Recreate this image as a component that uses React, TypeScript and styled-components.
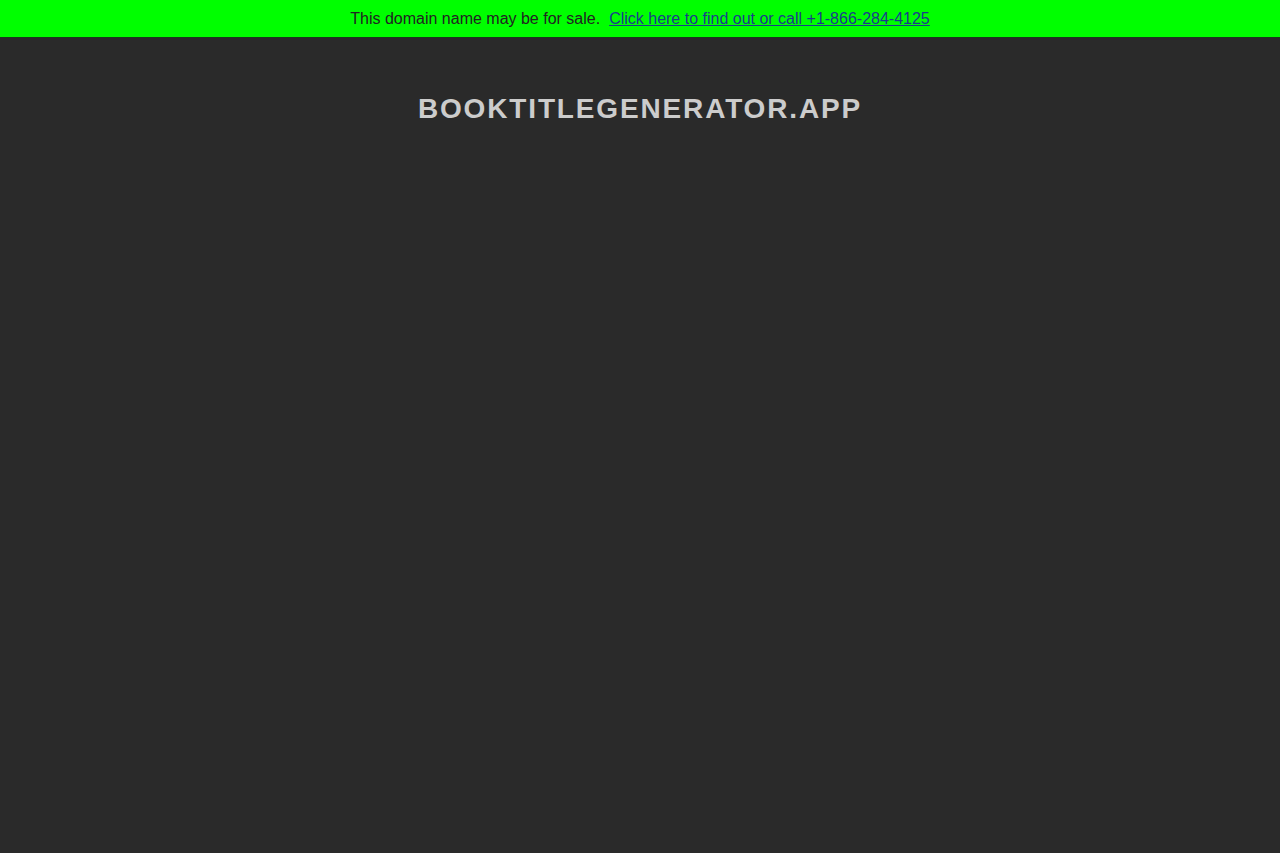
import React from "react";
import styled, { createGlobalStyle } from "styled-components";

const GlobalStyle = createGlobalStyle`
  html, body {
    margin: 0;
    padding: 0;
    height: 100%;
    background: #2a2a2a;
    font-family: "Liberation Sans", Arial, sans-serif;
  }
  #root {
    min-height: 100%;
  }
`;

const SaleBar = styled.div`
  height: 37px;
  background: #00ff00;
  border-bottom: 1px solid #1c3a1c;
  display: flex;
  align-items: center;
  justify-content: center;
  font-size: 16px;
  color: #222;
`;

const SaleLink = styled.a`
  color: #1a3c8c;
  text-decoration: underline;
  margin-left: 9px;
`;

const Page = styled.main`
  display: flex;
  flex-direction: column;
  align-items: center;
  padding-top: 55px;
`;

const DomainTitle = styled.h1`
  margin: 0;
  font-size: 28px;
  font-weight: 700;
  letter-spacing: 1.85px;
  color: #cccccc;
`;

export default function App() {
  return (
    <>
      <GlobalStyle />
      <SaleBar>
        This domain name may be for sale.
        <SaleLink href="#">Click here to find out or call +1-866-284-4125</SaleLink>
      </SaleBar>
      <Page>
        <DomainTitle>BOOKTITLEGENERATOR.APP</DomainTitle>
      </Page>
    </>
  );
}
